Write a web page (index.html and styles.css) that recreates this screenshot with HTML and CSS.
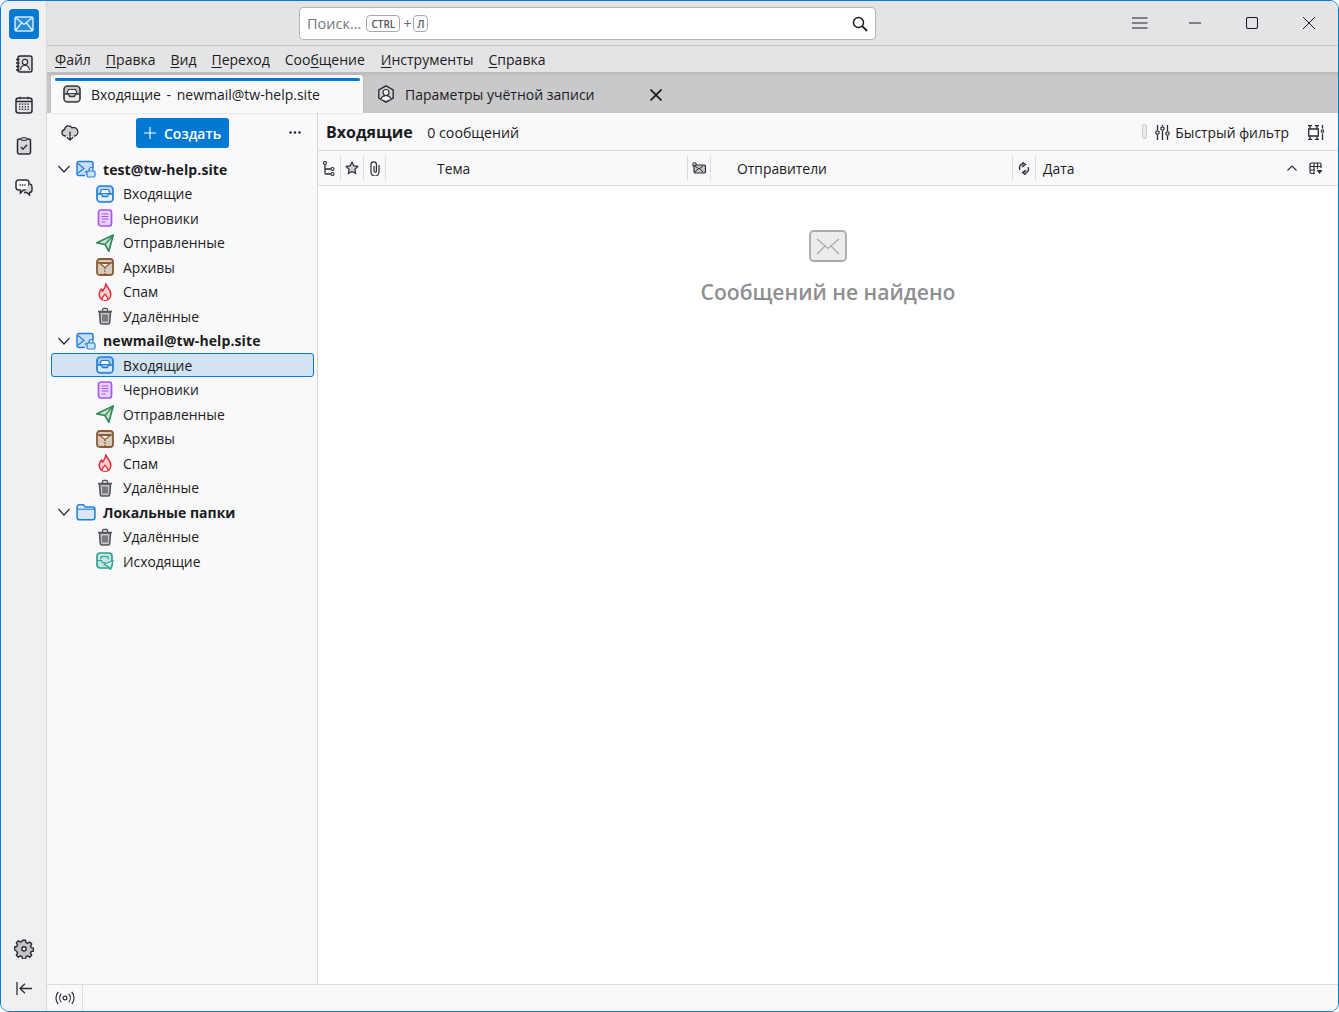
FILE: index.html
```html
<!DOCTYPE html>
<html lang="ru">
<head>
<meta charset="utf-8">
<title>Входящие - newmail@tw-help.site</title>
<link rel="stylesheet" href="styles.css">
</head>
<body>
<svg class="sprite" width="0" height="0">
  <defs>
    <symbol id="i-inbox" viewBox="0 0 18 18"><rect x="1" y="1" width="16" height="16" rx="3.5" fill="currentColor" fill-opacity=".28" stroke="currentColor" stroke-width="1.7"/><path d="M4 8.500L5.500 4.500h7L14 8.500z" fill="#fff" stroke="currentColor" stroke-width="1.200" stroke-linejoin="round"/><path d="M1.500 9h4l1 2.500h5l1-2.500h4" fill="none" stroke="currentColor" stroke-width="1.400"/><path d="M2 10h3l1 2.500h6l1-2.500h3v5.500H2z" fill="#fff" fill-opacity=".65"/></symbol>
    <symbol id="i-draft" viewBox="0 0 18 18"><rect x="2.500" y="1" width="13" height="16" rx="2.500" fill="currentColor" fill-opacity=".22" stroke="currentColor" stroke-width="1.700"/><path d="M5.500 5h7M5.500 7.500h7M5.500 10h7M5.500 13h4" stroke="currentColor" stroke-width="1.100"/></symbol>
    <symbol id="i-sent" viewBox="0 0 18 18"><path d="M.9 8.800L17.200.9 12.800 17.200 9 10.500z" fill="currentColor" fill-opacity=".22" stroke="currentColor" stroke-width="1.700" stroke-linejoin="round"/><path d="M9 10.500L17 1.500" stroke="currentColor" stroke-width="1.200"/></symbol>
    <symbol id="i-archive" viewBox="0 0 18 18"><rect x="1" y="1" width="16" height="16" rx="2.800" fill="currentColor" fill-opacity=".3" stroke="currentColor" stroke-width="1.800"/><path d="M1.500 4.800h15" stroke="currentColor" stroke-width="1.500"/><path d="M4 5.500L9 9.500l5-4z" fill="#fff" stroke="currentColor" stroke-width="1.100"/><path d="M9 9.500v7" stroke="currentColor" stroke-width="1.500" stroke-dasharray="1.500 1.200"/></symbol>
    <symbol id="i-spam" viewBox="0 0 18 18"><path d="M9.800.8c.6 3.200 5 5.200 5 10.400 0 3.700-2.600 6-5.800 6s-5.800-2.300-5.800-5.900c0-2.400 1-4 2.200-5.300l1.100 2.200C8 6.200 10 4 9.800.8z" fill="currentColor" fill-opacity=".2" stroke="currentColor" stroke-width="1.600" stroke-linejoin="round"/><path d="M6.200 16.800c-.6-2.200 1.300-3.700 2.800-5.600 1.500 1.900 3.400 3.400 2.800 5.600" fill="#fff" stroke="currentColor" stroke-width="1.300"/></symbol>
    <symbol id="i-trash" viewBox="0 0 18 18"><path d="M3.500 5h11l-.8 10.500a1.600 1.600 0 0 1-1.600 1.500H5.900a1.600 1.600 0 0 1-1.600-1.500z" fill="currentColor" fill-opacity=".32" stroke="currentColor" stroke-width="1.600"/><path d="M2 4.500h14M6.500 4V2.500a1 1 0 0 1 1-1h3a1 1 0 0 1 1 1V4M7 7.500v7M9 7.500v7M11 7.500v7" fill="none" stroke="currentColor" stroke-width="1.300"/></symbol>
    <symbol id="i-account" viewBox="0 0 20 18"><path d="M9 15.500H3a2 2 0 0 1-2-2v-10a2 2 0 0 1 2-2h12a2 2 0 0 1 2 2V8" fill="currentColor" fill-opacity=".22" stroke="currentColor" stroke-width="1.500"/><path d="M2 3.500l6 5-6 4.500M9 12.500l2-1.500" fill="none" stroke="currentColor" stroke-width="1.200"/><rect x="11" y="11" width="8" height="6" rx="1.200" fill="#cfe3f7" stroke="currentColor" stroke-width="1.200"/><path d="M13 11V9.500a2 2 0 0 1 4 0V11" fill="none" stroke="currentColor" stroke-width="1.200"/></symbol>
    <symbol id="i-folder" viewBox="0 0 18 16"><path d="M1 3.500a2 2 0 0 1 2-2h3.500l2 2H15a2 2 0 0 1 2 2v7.500a2 2 0 0 1-2 2H3a2 2 0 0 1-2-2z" fill="currentColor" fill-opacity=".15" stroke="currentColor" stroke-width="1.400"/><path d="M1.500 5.500h15" stroke="currentColor" stroke-width="1"/></symbol>
    <symbol id="i-outbox" viewBox="0 0 18 18"><rect x="1" y="1" width="15" height="15" rx="3" fill="currentColor" fill-opacity=".25" stroke="currentColor" stroke-width="1.700"/><path d="M1.500 8.500h4l1 2h3" fill="none" stroke="currentColor" stroke-width="1.200"/><path d="M4.500 7l1-2.500h6l1 2.500" fill="none" stroke="currentColor" stroke-width="1.200"/><path d="M8 12.500l9-4-2.500 9-2.500-3.500z" fill="#fff" stroke="currentColor" stroke-width="1.300" stroke-linejoin="round"/></symbol>
    <symbol id="i-chev" viewBox="0 0 12 12"><path d="M.5 3l5.500 6 5.500-6" fill="none" stroke="currentColor" stroke-width="1.200"/></symbol>
    <symbol id="i-x" viewBox="0 0 12 12"><path d="M.500.500l11 11M11.500.500l-11 11" fill="none" stroke="currentColor" stroke-width="1.800"/></symbol>
  </defs>
</svg>
<div class="window">
  <nav class="spaces">
    <div class="logo"><svg width="20" height="16" viewBox="0 0 20 16"><rect x="1" y="1" width="18" height="14" rx="1.500" fill="#5eaae6" fill-opacity=".4" stroke="#d6eafa" stroke-width="1.500"/><path d="M1.500 1.500L10 8.500l8.500-7M1.500 14.500L7.500 7M18.500 14.500L12.500 7" fill="none" stroke="#e4f1fb" stroke-width="1.300"/></svg></div>
    <button class="space-btn"><svg width="18" height="18" viewBox="0 0 18 18"><rect x="3" y="1" width="14" height="16" rx="2" fill="#d8d8da" stroke="#2b2a33" stroke-width="1.500"/><circle cx="10" cy="7" r="2.600" fill="#fff" stroke="#2b2a33" stroke-width="1.200"/><path d="M5.500 15c.4-3 2.300-4.500 4.500-4.500s4.100 1.500 4.500 4.500" fill="#fff" stroke="#2b2a33" stroke-width="1.200"/><path d="M1 4.500h3.500M1 8h3.500M1 11.500h3.500M1 15h3.500" stroke="#2b2a33" stroke-width="1.400"/></svg></button>
    <button class="space-btn"><svg width="18" height="18" viewBox="0 0 18 18"><rect x="1" y="2" width="16" height="15" rx="2.500" fill="#e4e4e6" stroke="#2b2a33" stroke-width="1.500"/><path d="M1 5.500h16" stroke="#2b2a33" stroke-width="1.400"/><path d="M5 .8v2.500M13 .8v2.500" stroke="#2b2a33" stroke-width="1.200"/><path d="M4 8.200h10M4 10.800h10M4 13.400h10" stroke="#2b2a33" stroke-width="1.300" stroke-dasharray="1.500 1.300"/></svg></button>
    <button class="space-btn"><svg width="16" height="18" viewBox="0 0 16 18"><rect x="1.500" y="2" width="13" height="15" rx="2" fill="#d8d8da" stroke="#2b2a33" stroke-width="1.500"/><rect x="5" y=".8" width="6" height="2.500" rx="1" fill="#d8d8da" stroke="#2b2a33" stroke-width="1"/><path d="M5 10l2 2.200 4-4.500" fill="none" stroke="#2b2a33" stroke-width="1.300"/></svg></button>
    <button class="space-btn space-chat"><svg width="18" height="18" viewBox="0 0 18 18"><path d="M3.500 1h8A2.500 2.500 0 0 1 14 3.500v5a2.500 2.500 0 0 1-2.500 2.500h-3l-3 3v-3h-2A2.500 2.500 0 0 1 1 8.500v-5A2.500 2.500 0 0 1 3.500 1z" fill="#fff" stroke="#2b2a33" stroke-width="1.500"/><path d="M15 5c1.500.5 2 1.500 2 3v3c0 1.500-1 2.500-2.500 2.500v2.500l-3-2.500H9" fill="#d8d8da" stroke="#2b2a33" stroke-width="1.400"/><path d="M4.500 6h6" stroke="#2b2a33" stroke-width="1.400" stroke-dasharray="1.400 1"/></svg></button>
    <div class="spaces-spacer"></div>
    <button class="space-btn"><svg width="20" height="20" viewBox="0 1.500 19 19"><path d="M8 1.500h3l.5 2.300 1.600.7 2-1.200 2 2-1.200 2 .7 1.600 2.300.5v2.800l-2.300.5-.7 1.600 1.200 2-2 2-2-1.200-1.600.7-.5 2.300H8l-.5-2.300-1.600-.7-2 1.200-2-2 1.200-2-.7-1.600L.1 11V8.200l2.300-.5.7-1.600-1.200-2 2-2 2 1.200 1.600-.7z" transform="translate(.4 1.200) scale(.96)" fill="#c4c4c7" stroke="#2b2a33" stroke-width="1.400" stroke-linejoin="round"/><circle cx="9.500" cy="10.900" r="2" fill="#fff" stroke="#2b2a33" stroke-width="1.300"/></svg></button>
    <button class="space-btn space-last"><svg width="16" height="14" viewBox="0 0 16 14"><path d="M1 0v13M16 6.500H4.500M9 1.800L4 6.500l5 4.700" fill="none" stroke="#2b2a33" stroke-width="1.300"/></svg></button>
  </nav>
  <div class="app">
    <header class="titlebar">
      <div class="search">
        <span class="search-text">Поиск...</span>
        <kbd class="key key-ctrl">CTRL</kbd>
        <span class="plus">+</span>
        <kbd class="key">Л</kbd>
        <svg class="search-icon" width="16" height="16" viewBox="0 0 16 16"><circle cx="6.500" cy="6.500" r="5" fill="none" stroke="#1c1b22" stroke-width="1.500"/><path d="M10.200 10.200L15 15" stroke="#1c1b22" stroke-width="1.800"/></svg>
      </div>
      <div class="wincontrols">
        <svg width="16" height="12" viewBox="0 0 16 12"><path d="M0 1h15.500M0 6h15.500M0 11h15.500" stroke="#1c1b22" stroke-width="1"/></svg>
        <svg width="12" height="2" viewBox="0 0 12 2"><path d="M0 1h12" stroke="#1c1b22" stroke-width="1"/></svg>
        <svg width="12" height="12" viewBox="0 0 12 12"><rect x=".5" y=".5" width="11" height="11" rx="1.500" fill="none" stroke="#1c1b22" stroke-width="1.100"/></svg>
        <svg width="12" height="12" viewBox="0 0 12 12"><path d="M0 0l12 12M12 0L0 12" stroke="#1c1b22" stroke-width="1"/></svg>
      </div>
    </header>
    <div class="menubar">
      <span><u>Ф</u>айл</span><span><u>П</u>равка</span><span><u>В</u>ид</span><span><u>П</u>ереход</span><span>Соо<u>б</u>щение</span><span class="menu-tools"><u>И</u>нструменты</span><span><u>С</u>правка</span>
    </div>
    <div class="tabs">
      <div class="tab tab-active">
        <svg class="tab-icon" width="18" height="18"><use href="#i-inbox"/></svg>
        <span class="tab-main">Входящие - newmail@tw-help.site</span>
      </div>
      <div class="tab tab-other">
        <svg class="tab-icon" width="18" height="18" viewBox="0 0 18 18"><path d="M9 .8l7.200 4.100v8.200L9 17.200 1.800 13.100V4.900z" fill="#d0d0d3" stroke="#2b2a33" stroke-width="1.400"/><circle cx="9" cy="7.500" r="3" fill="#fff" stroke="#2b2a33" stroke-width="1.200"/><path d="M4 14.500c.5-2.500 2.500-3.800 5-3.800s4.500 1.300 5 3.800" fill="#fff" stroke="#2b2a33" stroke-width="1.200"/></svg>
        <span class="tab-title">Параметры учётной записи</span>
        <svg class="tab-x" width="12" height="12"><use href="#i-x"/></svg>
      </div>
    </div>
    <div class="content">
      <aside class="folders">
        <div class="folder-toolbar">
          <svg class="cloud" width="18" height="18" viewBox="0 0 18 18"><path d="M5 12H4a3.300 3.300 0 0 1-.4-6.500A4 4 0 0 1 11 3.800 3.500 3.500 0 0 1 14 12h-1" fill="#d0d0d3" stroke="#2b2a33" stroke-width="1.300"/><path d="M9 7.500V16M5.800 13L9 16.200 12.200 13" fill="none" stroke="#2b2a33" stroke-width="1.300"/></svg>
          <button class="create"><svg width="12" height="12" viewBox="0 0 12 12"><path d="M6 0v12M0 6h12" stroke="#fff" stroke-width="1.100"/></svg><span>Создать</span></button>
          <svg class="dots" width="12" height="3" viewBox="0 0 12 3"><circle cx="1.500" cy="1.500" r="1.200" fill="#1c1b22"/><circle cx="6" cy="1.500" r="1.200" fill="#1c1b22"/><circle cx="10.500" cy="1.500" r="1.200" fill="#1c1b22"/></svg>
        </div>
        <ul class="tree">
          <li class="row account"><svg class="chev" width="12" height="12"><use href="#i-chev"/></svg><svg class="ficon blue" width="20" height="18"><use href="#i-account"/></svg><span>test@tw-help.site</span></li>
          <li class="row folder"><svg class="ficon blue" width="18" height="18"><use href="#i-inbox"/></svg><span>Входящие</span></li>
          <li class="row folder"><svg class="ficon purple" width="18" height="18"><use href="#i-draft"/></svg><span>Черновики</span></li>
          <li class="row folder"><svg class="ficon green" width="18" height="18"><use href="#i-sent"/></svg><span>Отправленные</span></li>
          <li class="row folder"><svg class="ficon brown" width="18" height="18"><use href="#i-archive"/></svg><span>Архивы</span></li>
          <li class="row folder"><svg class="ficon red" width="18" height="18"><use href="#i-spam"/></svg><span>Спам</span></li>
          <li class="row folder"><svg class="ficon gray" width="18" height="18"><use href="#i-trash"/></svg><span>Удалённые</span></li>
          <li class="row account"><svg class="chev" width="12" height="12"><use href="#i-chev"/></svg><svg class="ficon blue" width="20" height="18"><use href="#i-account"/></svg><span>newmail@tw-help.site</span></li>
          <li class="row folder selected"><svg class="ficon blue" width="18" height="18"><use href="#i-inbox"/></svg><span>Входящие</span></li>
          <li class="row folder"><svg class="ficon purple" width="18" height="18"><use href="#i-draft"/></svg><span>Черновики</span></li>
          <li class="row folder"><svg class="ficon green" width="18" height="18"><use href="#i-sent"/></svg><span>Отправленные</span></li>
          <li class="row folder"><svg class="ficon brown" width="18" height="18"><use href="#i-archive"/></svg><span>Архивы</span></li>
          <li class="row folder"><svg class="ficon red" width="18" height="18"><use href="#i-spam"/></svg><span>Спам</span></li>
          <li class="row folder"><svg class="ficon gray" width="18" height="18"><use href="#i-trash"/></svg><span>Удалённые</span></li>
          <li class="row account account-local"><svg class="chev" width="12" height="12"><use href="#i-chev"/></svg><svg class="ficon blue" width="20" height="18"><use href="#i-folder"/></svg><span>Локальные папки</span></li>
          <li class="row folder"><svg class="ficon gray" width="18" height="18"><use href="#i-trash"/></svg><span>Удалённые</span></li>
          <li class="row folder"><svg class="ficon teal" width="18" height="18"><use href="#i-outbox"/></svg><span>Исходящие</span></li>
        </ul>
      </aside>
      <main class="messages">
        <div class="msg-toolbar">
          <strong class="msg-title">Входящие</strong>
          <span class="msg-count">0 сообщений</span>
          <span class="toggle"></span>
          <svg class="sliders" width="15" height="15" viewBox="0 0 15 15"><path d="M2.500 0v5M2.500 10v5M7.500 0v1M7.500 6v9M12.500 0v6M12.500 11v4" stroke="#2b2a33" stroke-width="1.300"/><circle cx="2.500" cy="7.500" r="1.700" fill="none" stroke="#2b2a33" stroke-width="1.200"/><circle cx="7.500" cy="3.500" r="1.700" fill="none" stroke="#2b2a33" stroke-width="1.200"/><circle cx="12.500" cy="8.500" r="1.700" fill="none" stroke="#2b2a33" stroke-width="1.200"/></svg>
          <span class="filter-label">Быстрый фильтр</span>
          <svg class="layout" width="16" height="15" viewBox="0 0 16 15"><path d="M0 .7h4M7 .7h4M2 .7v2.800M9 .7v2.800M0 14.300h4M7 14.300h4M2 14.300v-2.800M9 14.300v-2.800M.7 4h9.600v7H.7zM14.500 0v3.500M14.500 8.500V15" fill="none" stroke="#2b2a33" stroke-width="1.300"/><circle cx="14.500" cy="6" r="1.300" fill="none" stroke="#2b2a33" stroke-width="1.100"/></svg>
        </div>
        <div class="cols">
          <div class="col col-ico"><svg width="12" height="15" viewBox="0 0 12 15"><circle cx="2" cy="2" r="1.500" fill="none" stroke="#2b2a33" stroke-width="1.100"/><circle cx="9.500" cy="8" r="1.500" fill="none" stroke="#2b2a33" stroke-width="1.100"/><circle cx="9.500" cy="13" r="1.500" fill="none" stroke="#2b2a33" stroke-width="1.100"/><path d="M2 3.500V12a1 1 0 0 0 1 1h5M2 8h6" fill="none" stroke="#2b2a33" stroke-width="1.300"/></svg></div>
          <div class="col col-ico"><svg width="14" height="14" viewBox="0 0 14 14"><path d="M7 1l1.800 3.900 4.200.5-3.100 2.900.8 4.200L7 10.400l-3.700 2.100.8-4.200L1 5.400l4.200-.5z" fill="#d0d0d3" stroke="#2b2a33" stroke-width="1.200" stroke-linejoin="round"/></svg></div>
          <div class="col col-ico col-narrow"><svg width="10" height="15" viewBox="0 0 10 15"><path d="M9 4v7a4 4 0 0 1-8 0V3.500a2.700 2.700 0 0 1 5.400 0V10a1.200 1.200 0 0 1-2.400 0V5" fill="none" stroke="#2b2a33" stroke-width="1.200"/></svg></div>
          <div class="col col-text col-subject">Тема</div>
          <div class="col col-ico"><svg width="14" height="12" viewBox="0 0 14 12"><circle cx="2.500" cy="2.500" r="1.700" fill="none" stroke="#2b2a33" stroke-width="1.100"/><rect x="2" y="3" width="11.500" height="8" rx="1.500" fill="#c4c4c7" stroke="#2b2a33" stroke-width="1.200"/><path d="M3 4l4 3 4-3M3 10l3-3M11 10L8 7" fill="none" stroke="#2b2a33" stroke-width="1"/></svg></div>
          <div class="col col-text col-sender">Отправители</div>
          <div class="col col-ico"><svg width="12" height="13" viewBox="0 0 12 13"><path d="M2 8a4.200 4.200 0 0 1 3-6.300V.5l2.500 2L5 4.500V3M10 5a4.200 4.200 0 0 1-3 6.300v1.200l-2.500-2L7 8.500V10" fill="#c4c4c7" stroke="#2b2a33" stroke-width="1.200"/></svg></div>
          <div class="col col-date">
            <span>Дата</span>
            <svg class="sort" width="10" height="6" viewBox="0 0 10 6"><path d="M.5 5.500L5 1l4.500 4.500" fill="none" stroke="#2b2a33" stroke-width="1.100"/></svg>
            <svg class="picker" width="14" height="13" viewBox="0 0 14 13"><path d="M6 11.500H2.500a1.500 1.500 0 0 1-1.500-1.500V2.500A1.500 1.500 0 0 1 2.500 1h8A1.500 1.500 0 0 1 12 2.500V6" fill="none" stroke="#2b2a33" stroke-width="1.200"/><path d="M1 4.500h11M5 1v10.500M8.500 1v6M1 8h5" stroke="#2b2a33" stroke-width="1.100"/><path d="M7.500 8h6l-3 4z" fill="#2b2a33"/></svg>
          </div>
        </div>
        <div class="empty">
          <svg width="38" height="32" viewBox="0 0 38 32"><rect x="1" y="1" width="36" height="30" rx="3.500" fill="#ececee" stroke="#a9a9ac" stroke-width="1.800"/><path d="M8 9l11 9.500L30 9M8 24l8-8M30 24l-8-8" fill="none" stroke="#a9a9ac" stroke-width="1.200"/></svg>
          <p class="empty-text">Сообщений не найдено</p>
        </div>
      </main>
    </div>
    <footer class="status">
      <div class="status-cell"><svg width="20" height="14" viewBox="0 0 20 14"><circle cx="10" cy="7" r="1.900" fill="none" stroke="#2b2a33" stroke-width="1.200"/><path d="M6.200 2.800c-2 2.400-2 6 0 8.400M13.800 2.800c2 2.400 2 6 0 8.400M3.200 1c-3 3.500-3 8.500 0 12M16.800 1c3 3.500 3 8.500 0 12" fill="none" stroke="#2b2a33" stroke-width="1.200"/></svg></div>
    </footer>
  </div>
</div>
</body>
</html>
```
FILE: styles.css
```css
* { box-sizing: border-box; }
html, body { margin: 0; height: 100%; background: #fff; }
body { font-family: "Open Sans", "Noto Sans", "Liberation Sans", sans-serif; font-size: 13.87px; color: #1c1b22; overflow: hidden; }
.sprite { position: absolute; }
ul { list-style: none; margin: 0; padding: 0; }
button { font: inherit; border: 0; background: none; padding: 0; color: inherit; }
svg { display: block; flex: none; }

.window { display: flex; width: 1339px; height: 1012px; border: 1px solid #0078d4; border-radius: 9px; overflow: hidden; background: #f9f9fb; }

.spaces { display: flex; flex-direction: column; align-items: center; width: 46px; background: #f0f0f2; border-right: 1px solid #d8d8da; padding: 8px 0 2px; flex: none; }
.logo { width: 30px; height: 30px; border-radius: 4px; background: #0078d4; display: flex; align-items: center; justify-content: center; margin-bottom: 4px; }
.space-btn { width: 30px; height: 41px; display: flex; align-items: center; justify-content: center; }
.space-chat { padding-top: 2px; }
.space-last { height: 40px; }
.spaces-spacer { flex: 1; }

.app { flex: 1; min-width: 0; display: flex; flex-direction: column; }

.titlebar { height: 45px; display: flex; align-items: center; background: #e4e4e7; border-bottom: 1px solid #c6c6c9; flex: none; }
.search { align-self: flex-start; margin: 6px 0 0 252px; width: 577px; height: 33px; background: #fff; border: 1px solid #b5b5b8; border-radius: 4px; display: flex; align-items: center; padding: 0 7px; }
.search-text { color: #77777b; font-size: 14.5px; margin-right: 5px; }
.key { font-family: "Open Sans", sans-serif; font-size: 10px; font-weight: 600; color: #55555a; border: 1px solid #a9a9ac; border-radius: 4px; height: 17px; min-width: 15px; padding: 0; display: inline-flex; align-items: center; justify-content: center; }
.key-ctrl { width: 34px; }
.plus { color: #66666a; margin: 0 2px 0 3px; font-size: 14px; }
.search-icon { margin-left: auto; }
.wincontrols { display: flex; flex: 1; align-items: center; margin-left: 256px; gap: 43px; }
.wincontrols svg:first-child { margin-right: -2px; }
.wincontrols svg:nth-child(3), .wincontrols svg:nth-child(4) { margin-left: 2px; }

.menubar { height: 26px; background: #e4e4e7; display: flex; align-items: center; gap: 15px; padding-left: 8px; flex: none; font-size: 14px; }
.menubar u { text-underline-offset: 2px; }
.menu-tools { margin-left: 1px; }

.tabs { height: 41px; background: linear-gradient(#bcbcbf, #c9c9cc 5px); display: flex; align-items: flex-end; flex: none; padding-left: 4px; }
.tab { height: 38px; display: flex; align-items: center; }
.tab-active { width: 312px; background: #f9f9fb; border-radius: 3px 3px 0 0; padding-left: 12px; position: relative; box-shadow: 0 0 3px rgba(0,0,0,.15); }
.tab-active::before { content: ""; position: absolute; left: 4px; right: 3px; top: 3px; height: 3px; background: #0078d4; border-radius: 2px; }
.tab-main { font-size: 14px; word-spacing: 2px; }
.tab-icon { margin-right: 10px; color: #3d3d42; }
.tab-other { width: 320px; padding-left: 14px; }
.tab-title { width: 245px; white-space: nowrap; font-size: 14px; }
.tab-x { margin-top: 2px; }

.content { flex: 1; min-height: 0; display: flex; }

.folders { width: 271px; flex: none; background: #f9f9fb; border-right: 1px solid #d4d4d7; display: flex; flex-direction: column; padding: 0 3px 0 4px; }
.folder-toolbar { height: 44px; display: flex; align-items: center; flex: none; padding-bottom: 5px; }
.cloud { margin-left: 10px; }
.create { margin-left: 57px; width: 93px; height: 30px; margin-top: 1px; background: #0078d4; border-radius: 3px; color: #fff; font-weight: 600; font-size: 14px; display: flex; align-items: center; gap: 8px; padding-left: 8px; }
.dots { margin-left: 60px; }
.tree { flex: 1; }
.row { height: 24.5px; display: flex; align-items: center; white-space: nowrap; border: 1px solid transparent; border-radius: 3px; }
.chev { margin-left: 6px; margin-right: 6px; color: #2b2a33; }
.account { font-weight: 700; font-size: 14px; letter-spacing: .1px; }
.account-local { letter-spacing: 0; }
.account .ficon { margin-right: 7px; }
.folder { padding-left: 44px; }
.folder .ficon { margin-right: 9px; }
.selected { background: #d2e4f4; border-color: #0078d4; height: 24px; margin-bottom: .5px; }
.blue { color: #1f7fdc; }
.purple { color: #a855f0; }
.green { color: #2f8a57; }
.brown { color: #8a5a30; }
.red { color: #e5303a; }
.gray { color: #55555a; }
.teal { color: #27a394; }

.messages { flex: 1; min-width: 0; display: flex; flex-direction: column; background: #fff; }
.msg-toolbar { height: 38px; display: flex; align-items: center; background: #f9f9fb; border-bottom: 1px solid #dcdcdf; padding: 1px 0 0 8px; flex: none; }
.msg-title { font-size: 16px; font-weight: 700; margin-right: 14.500px; }
.msg-count { flex: 1; font-size: 14.2px; }
.toggle { width: 5px; height: 15px; border: 1px solid #c8c8cb; background: #ececee; border-radius: 3px; margin-right: 8px; margin-top: -2px; }
.sliders { margin-right: 5px; }
.filter-label { margin-right: 19px; }
.layout { margin-right: 14px; }

.cols { height: 35px; display: flex; align-items: center; background: #f9f9fb; border-bottom: 1px solid #dcdcdf; flex: none; }
.col { height: 24px; display: flex; align-items: center; }
.col-ico { width: 23px; justify-content: center; border-right: 1px solid #dcdcdf; flex: none; }
.col-narrow { width: 22px; }
.col-text { flex: none; width: 302px; border-right: 1px solid #dcdcdf; }
.col-subject { padding-left: 51px; }
.col-sender { padding-left: 26px; }
.col-date { flex: 1; padding: 0 15px 0 7px; }
.col-date span { flex: 1; }
.sort { margin-right: 12px; }

.empty { flex: 1; display: flex; flex-direction: column; align-items: center; padding-top: 44px; }
.empty-text { margin: 15px 0 0; font-size: 21.1px; font-weight: 600; color: #8f8f92; }

.status { height: 27px; background: #f9f9fb; border-top: 1px solid #dcdcdf; flex: none; display: flex; }
.status-cell { width: 36px; border-right: 1px solid #dcdcdf; display: flex; align-items: center; justify-content: center; }
```
